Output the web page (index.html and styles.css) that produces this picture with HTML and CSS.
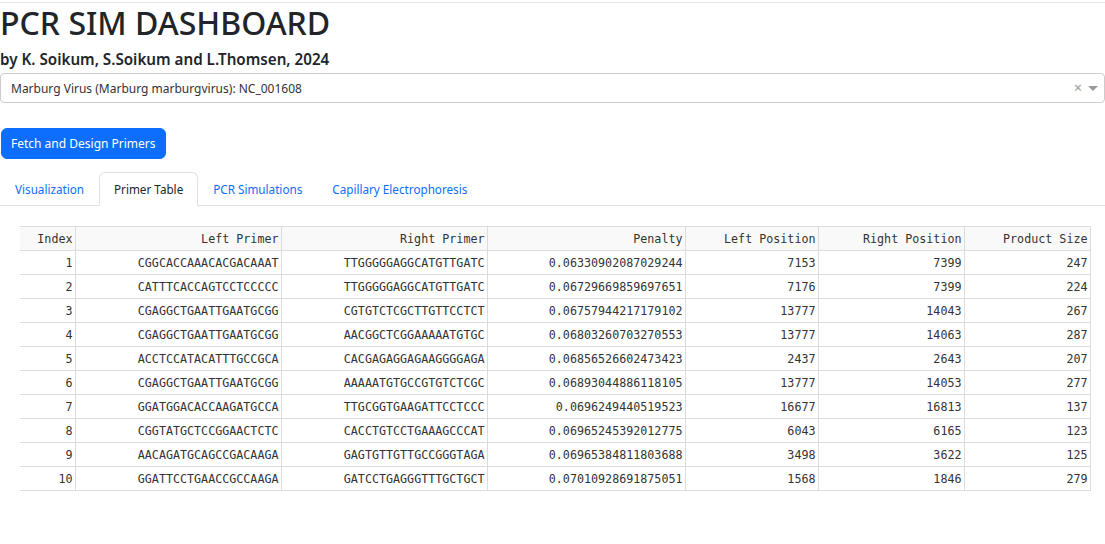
FILE: index.html
```html
<!DOCTYPE html>
<html>
<head>
<meta charset="utf-8">
<link rel="stylesheet" href="styles.css">
</head>
<body>
<div class="page">
  <h1 class="title">PCR SIM DASHBOARD</h1>
  <h5 class="subtitle">by K. Soikum, S.Soikum and L.Thomsen, 2024</h5>
  <div class="select">
    <span class="select-value">Marburg Virus (Marburg marburgvirus): NC_001608</span>
    <span class="select-icons"><span class="clear">×</span><span class="caret"></span></span>
  </div>
  <button class="btn">Fetch and Design Primers</button>
  <ul class="tabs">
    <li class="tab">Visualization</li>
    <li class="tab active">Primer Table</li>
    <li class="tab">PCR Simulations</li>
    <li class="tab">Capillary Electrophoresis</li>
  </ul>
  <div class="table-wrap">
    <table class="grid">
      <colgroup>
        <col class="c1"><col class="c2"><col class="c3"><col class="c4"><col class="c5"><col class="c6"><col class="c7">
      </colgroup>
      <thead>
        <tr><th>Index</th><th>Left Primer</th><th>Right Primer</th><th>Penalty</th><th>Left Position</th><th>Right Position</th><th>Product Size</th></tr>
      </thead>
      <tbody>
        <tr><td>1</td><td>CGGCACCAAACACGACAAAT</td><td>TTGGGGGAGGCATGTTGATC</td><td>0.06330902087029244</td><td>7153</td><td>7399</td><td>247</td></tr>
        <tr><td>2</td><td>CATTTCACCAGTCCTCCCCC</td><td>TTGGGGGAGGCATGTTGATC</td><td>0.06729669859697651</td><td>7176</td><td>7399</td><td>224</td></tr>
        <tr><td>3</td><td>CGAGGCTGAATTGAATGCGG</td><td>CGTGTCTCGCTTGTTCCTCT</td><td>0.06757944217179102</td><td>13777</td><td>14043</td><td>267</td></tr>
        <tr><td>4</td><td>CGAGGCTGAATTGAATGCGG</td><td>AACGGCTCGGAAAAATGTGC</td><td>0.06803260703270553</td><td>13777</td><td>14063</td><td>287</td></tr>
        <tr><td>5</td><td>ACCTCCATACATTTGCCGCA</td><td>CACGAGAGGAGAAGGGGAGA</td><td>0.06856526602473423</td><td>2437</td><td>2643</td><td>207</td></tr>
        <tr><td>6</td><td>CGAGGCTGAATTGAATGCGG</td><td>AAAAATGTGCCGTGTCTCGC</td><td>0.06893044886118105</td><td>13777</td><td>14053</td><td>277</td></tr>
        <tr><td>7</td><td>GGATGGACACCAAGATGCCA</td><td>TTGCGGTGAAGATTCCTCCC</td><td>0.0696249440519523</td><td>16677</td><td>16813</td><td>137</td></tr>
        <tr><td>8</td><td>CGGTATGCTCCGGAACTCTC</td><td>CACCTGTCCTGAAAGCCCAT</td><td>0.06965245392012775</td><td>6043</td><td>6165</td><td>123</td></tr>
        <tr><td>9</td><td>AACAGATGCAGCCGACAAGA</td><td>GAGTGTTGTTGCCGGGTAGA</td><td>0.06965384811803688</td><td>3498</td><td>3622</td><td>125</td></tr>
        <tr><td>10</td><td>GGATTCCTGAACCGCCAAGA</td><td>GATCCTGAGGGTTTGCTGCT</td><td>0.07010928691875051</td><td>1568</td><td>1846</td><td>279</td></tr>
      </tbody>
    </table>
  </div>
</div>
</body>
</html>
```

FILE: styles.css
```css
* { box-sizing: border-box; }
html, body { margin: 0; padding: 0; background: #fff; }
body {
  font-family: "Noto Sans", "Open Sans", sans-serif;
  color: #212529;
  padding-top: 2px;
}
.page {
  border-top: 1px solid #e6e6e6;
  display: flex;
  flex-direction: column;
  align-items: flex-start;
}
.title {
  margin: 0;
  font-size: 32px;
  font-weight: 500;
  line-height: 40px;
}
.subtitle {
  margin: 4px 0 0 0;
  font-size: 15.2px;
  font-weight: 600;
  line-height: 24px;
}
.select {
  margin-top: 2px;
  width: 100%;
  height: 30px;
  border: 1px solid #ccc;
  border-radius: 4px;
  display: flex;
  align-items: center;
  justify-content: space-between;
  padding: 0 6px 0 10px;
  font-size: 12px;
  color: #333;
}
.select-icons { display: flex; align-items: center; gap: 6px; }
.clear { color: #999; font-size: 14px; line-height: 1; }
.caret {
  width: 0; height: 0;
  border-left: 5px solid transparent;
  border-right: 5px solid transparent;
  border-top: 5px solid #999;
}
.btn {
  margin: 25px 0 0 1px;
  height: 31px;
  padding: 0 9px;
  background: #0d6efd;
  color: #fff;
  border: 1px solid #0d6efd;
  border-radius: 6px;
  font-family: inherit;
  font-size: 12px;
}
.tabs {
  list-style: none;
  margin: 13px 0 0 0;
  padding: 0;
  width: 100%;
  display: flex;
  border-bottom: 1px solid #dee2e6;
}
.tab {
  height: 34px;
  padding: 0 14px;
  margin-bottom: -1px;
  display: flex;
  align-items: center;
  font-size: 11.7px;
  color: #0d6efd;
  border: 1px solid transparent;
  border-radius: 6px 6px 0 0;
}
.tab.active {
  color: #212529;
  background: #fff;
  border-color: #dee2e6 #dee2e6 #fff;
}
.table-wrap {
  padding: 20px 0 0 20px;
}
.grid {
  border-collapse: collapse;
  font-family: "DejaVu Sans Mono", "Liberation Mono", monospace;
  font-size: 11.7px;
  color: #333;
  table-layout: fixed;
  width: 1070px;
}
.c1 { width: 55px; }
.c2 { width: 206px; }
.c3 { width: 206px; }
.c4 { width: 198px; }
.c5 { width: 133px; }
.c6 { width: 146px; }
.c7 { width: 126px; }
.grid th, .grid td {
  height: 24px;
  padding: 0 2px 0 4px;
  text-align: right;
  border: 1px solid #dcdcdc;
  white-space: nowrap;
  font-weight: normal;
}
.grid th { background: #f9f9f9; }
.grid tbody td:first-child, .grid thead th:first-child { border-left: none; }
```
